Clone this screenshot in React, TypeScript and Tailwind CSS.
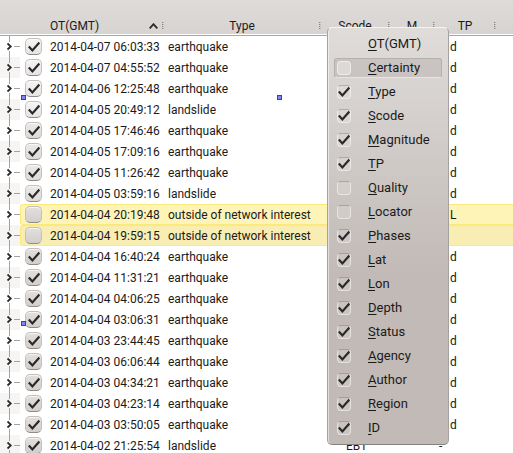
type Row = { time: string; type: string; tp: string; checked: boolean; scode?: string };

const quake = (time: string): Row => ({ time, type: "earthquake", tp: "d", checked: true });
const slide = (time: string): Row => ({ time, type: "landslide", tp: "d", checked: true });

const rows: Row[] = [
  quake("2014-04-07 06:03:33"),
  quake("2014-04-07 04:55:52"),
  quake("2014-04-06 12:25:48"),
  slide("2014-04-05 20:49:12"),
  quake("2014-04-05 17:46:46"),
  quake("2014-04-05 17:09:16"),
  quake("2014-04-05 11:26:42"),
  slide("2014-04-05 03:59:16"),
  { time: "2014-04-04 20:19:48", type: "outside of network interest", tp: "L", checked: false },
  { time: "2014-04-04 19:59:15", type: "outside of network interest", tp: "", checked: false },
  quake("2014-04-04 16:40:24"),
  quake("2014-04-04 11:31:21"),
  quake("2014-04-04 04:06:25"),
  quake("2014-04-04 03:06:31"),
  quake("2014-04-03 23:44:45"),
  quake("2014-04-03 06:06:44"),
  quake("2014-04-03 04:34:21"),
  quake("2014-04-03 04:23:14"),
  quake("2014-04-03 03:50:05"),
  { time: "2014-04-02 21:25:54", type: "landslide", tp: "-", checked: true, scode: "EBT" },
];

const columns: { label: string; checked: boolean | null }[] = [
  { label: "OT(GMT)", checked: null },
  { label: "Certainty", checked: false },
  { label: "Type", checked: true },
  { label: "Scode", checked: true },
  { label: "Magnitude", checked: true },
  { label: "TP", checked: true },
  { label: "Quality", checked: false },
  { label: "Locator", checked: false },
  { label: "Phases", checked: true },
  { label: "Lat", checked: true },
  { label: "Lon", checked: true },
  { label: "Depth", checked: true },
  { label: "Status", checked: true },
  { label: "Agency", checked: true },
  { label: "Author", checked: true },
  { label: "Region", checked: true },
  { label: "ID", checked: true },
];

function Tick() {
  return (
    <svg viewBox="0 0 12 12" className="pointer-events-none z-10 col-start-1 row-start-1 size-3 place-self-center" fill="none" stroke="#2b2927" strokeWidth="2.2">
      <path d="M0.8 5.6 4.4 9.4 11.4 1.6" />
    </svg>
  );
}

function Grip() {
  return (
    <svg viewBox="0 0 3 8" className="h-2 w-[3px] shrink-0" fill="#8a8581">
      <path d="M0 0h1.4v1H0zM0 2h1.4v1H0zM0 4h1.4v1H0zM0 6h1.4v1H0z" />
    </svg>
  );
}

function Head({ label, span, sorted }: { label: string; span?: number; sorted?: boolean }) {
  return (
    <th scope="col" colSpan={span} className="p-0 font-normal">
      <div className="flex h-[35px] items-end border-b border-white">
        <span className="flex-1 leading-4">{label}</span>
        <div className="flex h-4 items-center gap-1">
          {sorted && (
            <svg viewBox="0 0 9 6" className="h-1.5 w-[9px]" fill="none" stroke="#2b2927" strokeWidth="1.8">
              <path d="M0.7 5.4 4.5 1.2 8.3 5.4" />
            </svg>
          )}
          <Grip />
        </div>
      </div>
    </th>
  );
}

function Handle({ place }: { place: string }) {
  return <i className={`absolute size-[5px] border border-[#3b35e0] bg-[#8583f5] ${place}`} />;
}

export default function App() {
  return (
    <div className="relative h-screen overflow-hidden bg-white font-['Roboto','Noto_Sans',sans-serif] text-xs text-[#1c1a19]">
      <table className="w-full table-fixed border-separate border-spacing-0">
        <colgroup>
          <col className="w-5" />
          <col className="w-[145px]" />
          <col className="w-[157px]" />
          <col className="w-[69px]" />
          <col className="w-[45px]" />
          <col className="w-[61px]" />
          <col />
        </colgroup>
        <thead className="bg-linear-to-b from-[#dedbd8] to-[#d6d3d0]">
          <tr className="[&>*]:border-b [&>*]:border-[#aaa7a4]">
            <Head label="OT(GMT)" span={2} sorted />
            <Head label="Type" />
            <Head label="Scode" />
            <Head label="M" />
            <Head label="TP" />
            <td className="p-0">
              <div className="h-[35px] border-b border-white" />
            </td>
          </tr>
        </thead>
        <tbody>
          {rows.map((row, i) => {
            const cell = row.checked
              ? "h-[21px] p-0 whitespace-nowrap"
              : i === 8
                ? "h-[21px] border-y border-[#fbe97c] bg-[#fef4b8] p-0 whitespace-nowrap"
                : "h-[21px] border-y border-[#fbe97c] bg-[#f8edb3] p-0 whitespace-nowrap";
            const face =
              i < 4 ? "from-[#f6f5f5] to-[#e6e4e3]" : i < 8 ? "from-[#eceae9] to-[#dcd9d7]" : "from-[#e2dfdd] to-[#d2cecb]";
            return (
              <tr key={row.time}>
                <td className={i % 2 ? "h-[21px] bg-[#f6f5f4] p-0" : "h-[21px] p-0"}>
                  <svg viewBox="0 0 20 21" className="block h-[21px] w-5" fill="none">
                    <path d="M9.5 0V6M9.5 15V21M14 10.5H20" stroke="#a5a19e" />
                    <path d="M7.5 7.5 10.8 10.5 7.5 13.5" stroke="#2b2927" strokeWidth="1.7" />
                  </svg>
                </td>
                <td className={row.checked ? cell : `${cell} rounded-l-[3px] border-l`}>
                  <label className={row.checked ? "flex items-center gap-2 pl-[5px]" : "flex items-center gap-2 pl-1"}>
                    <span className="grid">
                      <input
                        type="checkbox"
                        defaultChecked={row.checked}
                        className={`col-start-1 row-start-1 size-[17px] appearance-none rounded-[5px] border border-[#c3bfbc] border-b-[#8f8b87] bg-linear-to-b shadow-[inset_0_1px_0_#ffffffaa] ${face}`}
                      />
                      {row.checked && <Tick />}
                    </span>
                    {row.time}
                  </label>
                </td>
                <td className={cell}>
                  <span className="pl-[3px]">{row.type}</span>
                </td>
                <td className={cell}>
                  <span className="pl-6">{row.scode}</span>
                </td>
                <td className={cell} />
                <td className={cell}>
                  <span className={row.tp === "-" ? "pl-[3px]" : "pl-3.5"}>{row.tp}</span>
                </td>
                <td className={cell} />
              </tr>
            );
          })}
        </tbody>
      </table>

      <Handle place="top-[95px] left-[21px]" />
      <Handle place="top-[95px] left-[277px]" />
      <Handle place="top-[321px] left-[21px]" />

      <div className="absolute top-[27px] left-[327px] w-[122px] rounded-[5px] border border-[#a5a19e] border-t-[#f4f3f2] border-b-[#85817e] bg-linear-to-b from-[#dfdcda] to-[#c1bab6] to-60% px-1.5 py-1 text-[13px] shadow-[inset_1px_0_0_#ffffff80]">
        {columns.map(({ label, checked }) => (
          <label
            key={label}
            className={
              label === "Certainty"
                ? "my-0.5 flex h-5 items-center rounded-[3px] border border-[#b5b0ac] border-b-[#e6e3e1] bg-[#c9c4c1] pl-0.5"
                : "flex h-6 items-center pl-[3px]"
            }
          >
            <span className="grid w-[31px] justify-start">
              {checked !== null && (
                <input
                  type="checkbox"
                  defaultChecked={checked}
                  className={
                    label === "Certainty"
                      ? "col-start-1 row-start-1 size-3.5 appearance-none rounded-[4px] border border-white/50 bg-[#dcd9d7]"
                      : "col-start-1 row-start-1 size-3.5 appearance-none rounded-[4px] border border-white/50 border-t-black/20 bg-white/15"
                  }
                />
              )}
              {checked && <Tick />}
            </span>
            <span>
              <span className="underline underline-offset-2">{label[0]}</span>
              {label.slice(1)}
            </span>
          </label>
        ))}
      </div>
    </div>
  );
}
